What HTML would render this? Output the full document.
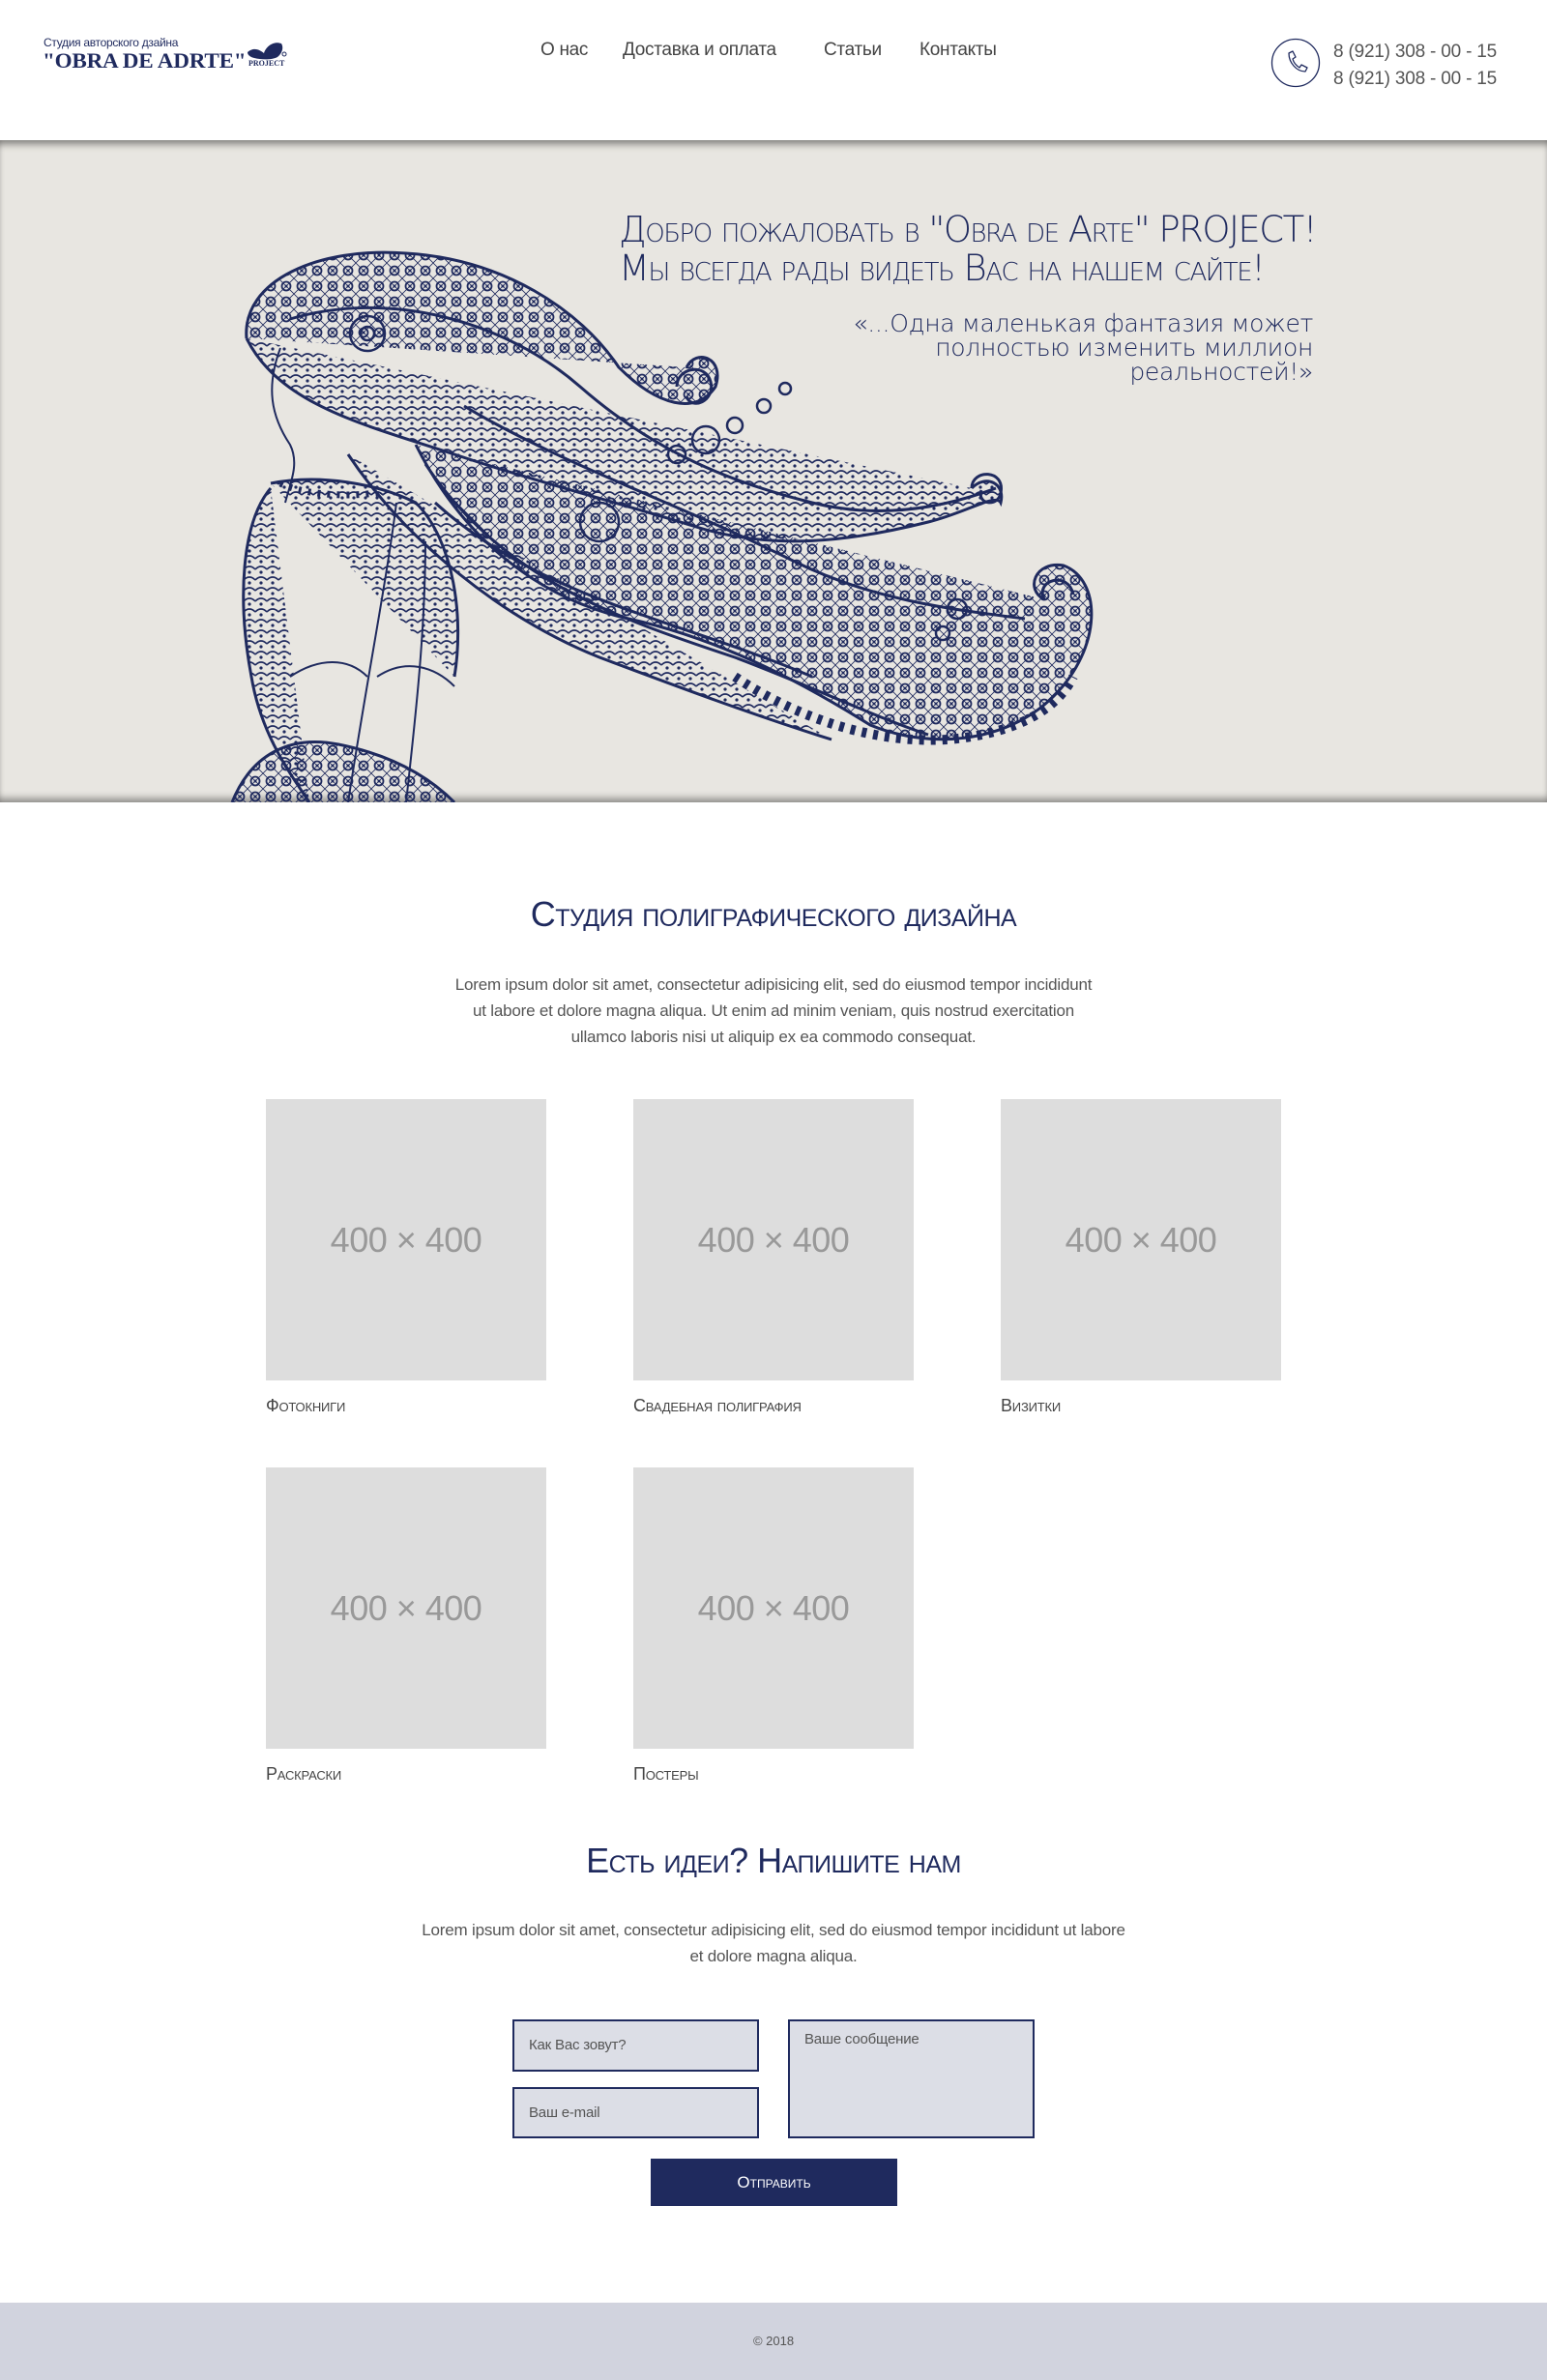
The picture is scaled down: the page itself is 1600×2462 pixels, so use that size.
<!DOCTYPE html>
<html><head><meta charset="utf-8">
<style>
*{margin:0;padding:0;box-sizing:border-box}
body{width:1600px;height:2462px;background:#fff;font-family:"Liberation Sans",sans-serif;color:#555;position:relative;overflow:hidden}
.abs{position:absolute}
.nav a{position:absolute;top:41px;font-size:19px;color:#444;text-decoration:none;letter-spacing:-0.3px}
.hero{position:absolute;left:0;top:145px;width:1600px;height:685px;background:#e8e6e1;box-shadow:inset 0 8px 8px -4px rgba(0,0,0,.45),inset 0 -8px 8px -4px rgba(0,0,0,.4)}
.h1{position:absolute;left:640px;white-space:nowrap;color:#1f2a5e;font-family:"DejaVu Sans",sans-serif;font-weight:200;font-variant:small-caps;font-size:37px;letter-spacing:-1.5px;line-height:38px}
.quote{position:absolute;right:242px;text-align:right;color:#1f2a5e;font-family:"DejaVu Sans",sans-serif;font-weight:200;font-size:25px;line-height:25px;letter-spacing:-0.3px}
.title{position:absolute;left:0;width:1600px;text-align:center;color:#1f2a5e;font-size:36px;font-variant:small-caps;letter-spacing:-0.5px}
.para{position:absolute;left:0;width:1600px;text-align:center;font-size:17px;line-height:27px;color:#555;letter-spacing:-0.2px}
.box{position:absolute;width:290px;height:291px;background:#dddddd;color:#999;font-size:36px;display:flex;align-items:center;justify-content:center;letter-spacing:-0.5px}
.lbl{position:absolute;font-size:18px;color:#444;font-variant:small-caps;letter-spacing:-0.2px}
.fld{position:absolute;background:#dcdee6;border:2px solid #1f2a5e;font-size:15px;color:#555;padding-left:15px;letter-spacing:-0.2px}
</style></head><body>

<div class="abs" style="left:45px;top:37px;font-size:12px;color:#1f2a5e;letter-spacing:-0.3px">Студия авторского дзайна</div>
<div class="abs" style="left:44px;top:50px;font-family:'Liberation Serif',serif;font-weight:bold;font-size:22px;color:#1f2a5e;letter-spacing:-0.2px;transform:scaleX(1.05);transform-origin:left">"OBRA DE ADRTE"</div>
<svg class="abs" style="left:253px;top:42px" width="45" height="30" viewBox="0 0 45 30"><path d="M3 12 C10 6 16 10 20 13 C22 6 30 0 38 3 C41 8 38 14 34 17 C28 20 18 20 10 18 C6 17 3 15 3 12Z" fill="#1f2a5e"/><circle cx="41" cy="14" r="2" fill="none" stroke="#1f2a5e"/></svg>
<div class="abs" style="left:257px;top:61px;font-family:'Liberation Serif',serif;font-weight:bold;font-size:8px;color:#1f2a5e">PROJECT</div>

<div class="nav">
<a style="left:559px">О нас</a>
<a style="left:644px">Доставка и оплата</a>
<a style="left:852px">Статьи</a>
<a style="left:951px">Контакты</a>
</div>
<svg class="abs" style="left:1314px;top:39px" width="52" height="52" viewBox="0 0 52 52"><circle cx="26" cy="26" r="24.5" fill="none" stroke="#1f2a5e" stroke-width="1.3"/><path d="M19 16 l4 -2 l3 6 l-3 2 c1 4 4 7 7 9 l2 -3 l6 3 l-2 4 c-9 0 -17 -9 -17 -19z" fill="none" stroke="#1f2a5e" stroke-width="1.3" stroke-linejoin="round"/></svg>
<div class="abs" style="left:1379px;top:40px;font-size:19px;color:#555;line-height:28px;letter-spacing:-0.2px">8 (921) 308 - 00 - 15<br>8 (921) 308 - 00 - 15</div>

<div class="hero">
<svg width="1600" height="685" viewBox="0 145 1600 685" style="position:absolute;left:0;top:0">
<defs>
<pattern id="p1" width="16" height="16" patternUnits="userSpaceOnUse"><circle cx="8" cy="8" r="4.5" fill="none" stroke="#1f2a5e" stroke-width="1.8"/><circle cx="8" cy="8" r="1.5" fill="#1f2a5e"/><path d="M0 0 L16 16 M16 0 L0 16" stroke="#1f2a5e" stroke-width="0.8"/></pattern>
<pattern id="p2" width="12" height="11" patternUnits="userSpaceOnUse"><path d="M0 6 Q6 0 12 6" fill="none" stroke="#1f2a5e" stroke-width="1.6"/><circle cx="6" cy="9" r="1.6" fill="#1f2a5e"/></pattern>
</defs>
<g fill="none" stroke="#1f2a5e" stroke-width="3">
<path d="M255 350 C250 290 330 255 420 262 C520 268 600 320 640 380 C680 420 720 430 740 400 C750 370 720 360 710 380" fill="url(#p1)"/>
<path d="M255 350 C290 420 380 440 470 470 C560 500 640 520 720 545 C800 570 880 560 960 540 C1000 530 1030 510 1035 520 C1040 500 1020 490 1005 505" fill="url(#p2)"/>
<path d="M300 330 C400 300 520 330 600 400 C680 470 760 500 840 520 C920 540 990 520 1030 505" />
<path d="M430 460 C480 560 560 620 650 640 C740 660 820 700 900 750 C960 775 1040 770 1090 720 C1140 670 1140 600 1100 585 C1070 580 1060 610 1080 620" fill="url(#p1)"/>
<path d="M440 480 C520 600 640 640 760 680 C840 710 900 740 960 760" stroke-width="3"/>
<path d="M450 520 C560 620 700 640 840 700" />
<path d="M480 420 C580 480 700 520 820 580 C900 620 980 630 1060 640"/>
<path d="M360 470 C420 560 520 640 620 680 C700 710 780 740 860 765" fill="url(#p2)"/>
<path d="M760 700 C820 740 900 770 980 765 C1040 760 1090 740 1110 700" stroke-width="10" stroke-dasharray="5 7"/>
<path d="M700 400 c0 -20 30 -25 35 -5 c5 20 -20 30 -25 15" />
<path d="M1005 505 c0 -20 35 -20 30 5 c-3 15 -25 12 -20 -3"/>
<path d="M1080 620 c-10 -20 25 -30 30 -5"/>
<g stroke-width="2.5"><circle cx="380" cy="345" r="18"/><circle cx="380" cy="345" r="7"/><circle cx="730" cy="455" r="14"/><circle cx="760" cy="440" r="8"/><circle cx="790" cy="420" r="7"/><circle cx="812" cy="402" r="6"/><circle cx="700" cy="470" r="9"/><circle cx="990" cy="630" r="10"/><circle cx="975" cy="655" r="7"/><circle cx="620" cy="540" r="20"/></g>
<path d="M290 360 C275 400 280 430 300 460 C310 480 300 500 295 520" stroke-width="2"/>
<path d="M280 505 C250 540 245 620 260 700 C270 760 300 800 320 830" fill="url(#p2)"/>
<path d="M280 500 C330 490 390 500 430 520 C470 560 480 640 470 700" fill="url(#p2)"/>
<path d="M300 700 C330 680 360 680 380 700 M390 700 C420 680 450 690 470 710" stroke-width="2"/>
<path d="M410 520 C400 600 380 700 360 830 M440 560 C440 650 430 740 420 830" stroke-width="2"/>
<path d="M240 830 C260 780 300 760 350 770 C400 780 440 800 470 830" fill="url(#p1)"/>
<path d="M290 500 c20 10 60 15 100 10" stroke-width="7" stroke-dasharray="3 7"/>
</g>
</svg>
<div class="h1" style="top:74px">Добро пожаловать в "Obra de Arte" PROJECT!</div>
<div class="h1" style="top:114px">Мы всегда рады видеть Вас на нашем сайте!</div>
<div class="quote" style="top:177px">«...Одна маленькая фантазия может<br>полностью изменить миллион<br>реальностей!»</div>
</div>

<div class="title" style="top:925px">Студия полиграфического дизайна</div>
<div class="para" style="top:1005px">Lorem ipsum dolor sit amet, consectetur adipisicing elit, sed do eiusmod tempor incididunt<br>ut labore et dolore magna aliqua. Ut enim ad minim veniam, quis nostrud exercitation<br>ullamco laboris nisi ut aliquip ex ea commodo consequat.</div>

<div class="box" style="left:275px;top:1137px">400 × 400</div>
<div class="box" style="left:655px;top:1137px">400 × 400</div>
<div class="box" style="left:1035px;top:1137px">400 × 400</div>
<div class="lbl" style="left:275px;top:1444px">Фотокниги</div>
<div class="lbl" style="left:655px;top:1444px">Свадебная полиграфия</div>
<div class="lbl" style="left:1035px;top:1444px">Визитки</div>

<div class="box" style="left:275px;top:1518px">400 × 400</div>
<div class="box" style="left:655px;top:1518px">400 × 400</div>
<div class="lbl" style="left:275px;top:1825px">Раскраски</div>
<div class="lbl" style="left:655px;top:1825px">Постеры</div>

<div class="title" style="top:1904px">Есть идеи? Напишите нам</div>
<div class="para" style="top:1983px">Lorem ipsum dolor sit amet, consectetur adipisicing elit, sed do eiusmod tempor incididunt ut labore<br>et dolore magna aliqua.</div>

<div class="fld" style="left:530px;top:2089px;width:255px;height:54px;line-height:50px">Как Вас зовут?</div>
<div class="fld" style="left:530px;top:2159px;width:255px;height:53px;line-height:49px">Ваш e-mail</div>
<div class="fld" style="left:815px;top:2089px;width:255px;height:123px;padding-top:10px">Ваше сообщение</div>
<div class="abs" style="left:673px;top:2233px;width:255px;height:49px;background:#1f2a5e;color:#fff;font-size:17px;text-align:center;line-height:49px;font-variant:small-caps">Отправить</div>

<div class="abs" style="left:0;top:2382px;width:1600px;height:80px;background:#d1d3de;text-align:center;font-size:13px;color:#555;line-height:80px">© 2018</div>
</body></html>
